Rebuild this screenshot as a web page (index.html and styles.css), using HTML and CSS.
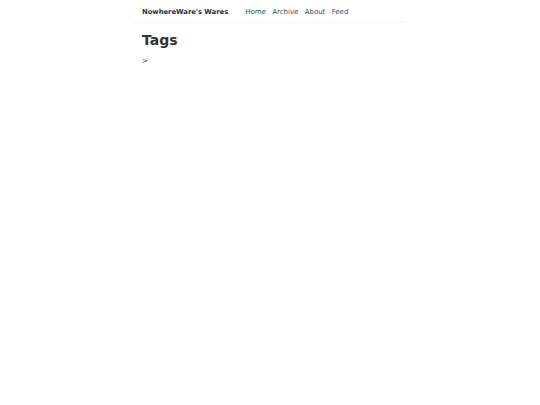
FILE: index.html
```html
<!DOCTYPE html>
<html>
<head>
<meta charset="utf-8">
<link rel="stylesheet" href="styles.css">
</head>
<body>
<div class="container">
  <header class="header">
    <a class="brand" href="#">NowhereWare's Wares</a>
    <nav class="nav">
      <a href="#">Home</a>
      <a href="#">Archive</a>
      <a href="#">About</a>
      <a href="#">Feed</a>
    </nav>
  </header>
  <main class="content">
    <h1 class="title">Tags</h1>
    <p class="crumb">&gt;</p>
  </main>
</div>
</body>
</html>
```
FILE: styles.css
```css
html, body {
  margin: 0;
  padding: 0;
  background: #fff;
}
body {
  font-family: "DejaVu Sans", sans-serif;
  color: #333;
}
.container {
  width: 270px;
  margin: 0 auto;
}
.header {
  display: flex;
  align-items: center;
  height: 23px;
  padding: 1px 7px 0;
  box-sizing: border-box;
  border-bottom: 1px dotted #e6e6e6;
}
.brand {
  font-size: 6.8px;
  font-weight: bold;
  color: #1f2d3d;
  text-decoration: none;
}
.nav {
  display: flex;
  gap: 6.3px;
  margin-left: 17px;
}
.nav a {
  font-size: 7px;
  color: #34495e;
  text-decoration: none;
}
.content {
  padding: 0 7px;
}
.title {
  font-size: 14px;
  font-weight: bold;
  margin: 9px 0 9px;
  color: #333;
}
.crumb {
  font-size: 7px;
  margin: 0;
  color: #333;
}
```
